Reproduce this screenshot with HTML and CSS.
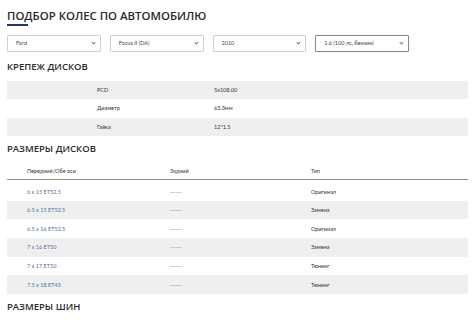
FILE: index.html
```html
<!DOCTYPE html>
<html lang="ru">
  <head>
    <meta charset="UTF-8" />
    <meta name="viewport" content="width=device-width, initial-scale=1.0" />
    <title>Подбор колес по автомобилю</title>
    <link rel="stylesheet" href="styles.css">
  </head>
  <body>
    <div class="container">
      <h1 class="title">ПОДБОР КОЛЕС ПО АВТОМОБИЛЮ</h1>

      <div class="filters">
        <div class="select"><span>Ford</span><i class="chev"></i></div>
        <div class="select"><span>Focus II (DA)</span><i class="chev"></i></div>
        <div class="select"><span>2010</span><i class="chev"></i></div>
        <div class="select active"><span>1.6 (100 лс, бензин)</span><i class="chev"></i></div>
      </div>

      <h2 class="section">КРЕПЕЖ ДИСКОВ</h2>
      <div class="table mount">
        <div class="row shade"><span></span><span>PCD</span><span>5x108.00</span></div>
        <div class="row"><span></span><span>Диаметр</span><span>63.3мм</span></div>
        <div class="row shade"><span></span><span>Гайка</span><span>12*1.5</span></div>
      </div>

      <h2 class="section">РАЗМЕРЫ ДИСКОВ</h2>
      <div class="table wheels">
        <div class="row head"><span>Передний/Обе оси</span><span>Задний</span><span>Тип</span></div>
        <div class="row"><a href="#">6 x 15 ET52.5</a><span class="dash">-----</span><span>Оригинал</span></div>
        <div class="row shade"><a href="#">6.5 x 15 ET52.5</a><span class="dash">-----</span><span>Замена</span></div>
        <div class="row"><a href="#">6.5 x 16 ET52.5</a><span class="dash">-----</span><span>Оригинал</span></div>
        <div class="row shade"><a href="#">7 x 16 ET50</a><span class="dash">-----</span><span>Замена</span></div>
        <div class="row"><a href="#">7 x 17 ET50</a><span class="dash">-----</span><span>Тюнинг</span></div>
        <div class="row shade"><a href="#">7.5 x 18 ET45</a><span class="dash">-----</span><span>Тюнинг</span></div>
      </div>

      <h2 class="section last">РАЗМЕРЫ ШИН</h2>
    </div>
  </body>
</html>
```

FILE: styles.css
```css
body {
  margin: 0;
  background-color: #fff;
  color: #333;
  font-family: "Lato", "Open Sans", sans-serif;
}
.container {
  padding: 8px 7px 0 7px;
  width: 461px;
}
.title,
.section {
  font-family: "Open Sans", sans-serif;
  font-weight: 600;
  color: #2b2b2b;
  margin: 0;
}
.title {
  font-size: 11.4px;
  line-height: 15px;
  padding-bottom: 3px;
}
.title::after {
  content: "";
  display: block;
  width: 21px;
  height: 1.5px;
  margin-top: 1px;
  background-color: #1f3a5c;
}
.filters {
  display: flex;
  gap: 9px;
  margin-top: 6px;
  width: 402px;
}
.select {
  flex: 1;
  height: 15px;
  border: 1px solid #cfcfcf;
  border-radius: 1px;
  display: flex;
  align-items: center;
  justify-content: space-between;
  padding: 0 5px 0 8px;
  font-size: 5.5px;
  color: #444;
}
.select.active {
  border-color: #8a8a8a;
  box-shadow: 0 0 1px rgba(0, 0, 0, 0.3);
}
.chev {
  width: 2px;
  height: 2px;
  border-right: 0.8px solid #777;
  border-bottom: 0.8px solid #777;
  transform: rotate(45deg);
  margin-top: -1px;
}
.section {
  font-size: 9.5px;
  line-height: 14px;
  margin-top: 8px;
}
.table + .section {
  margin-top: 6px;
}
.table {
  margin-top: 7px;
  font-size: 5.5px;
  color: #333;
}
.row {
  display: grid;
  align-items: center;
  height: 18.6px;
}
.shade {
  background-color: #efefef;
}
.mount .row {
  grid-template-columns: 90px 117px 1fr;
}
.wheels .row {
  grid-template-columns: 143px 141px 1fr;
}
.wheels .row > * {
  padding-left: 20px;
}
.wheels .head {
  height: 17px;
  border-bottom: 1.5px solid #8c8c8c;
  margin-bottom: 2px;
}
.wheels a {
  color: #4f6f99;
  text-decoration: none;
}
.dash {
  letter-spacing: 0.4px;
  color: #555;
}
.wheels {
  margin-top: 6px;
}
.table + .section.last {
  margin-top: 6px;
}
```
